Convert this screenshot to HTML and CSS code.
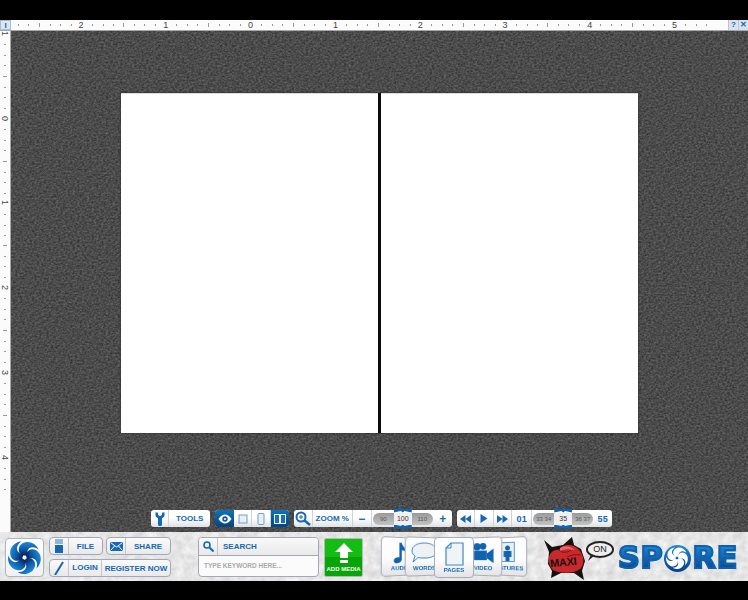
FILE: index.html
```html
<!DOCTYPE html>
<html lang="en">
<head>
    <meta charset="UTF-8">
    <meta name="viewport" content="width=device-width, initial-scale=1.0">
    <title>Spore Comic Reader</title>
    <link rel="stylesheet" href="styles.css">
</head>
<body>
    <svg class="defs" width="0" height="0">
        <defs>
            <linearGradient id="swirlBlue" x1="0" y1="0" x2="0" y2="1">
                <stop offset="0" stop-color="#1f8ad6"/>
                <stop offset="0.55" stop-color="#0b5aa6"/>
                <stop offset="1" stop-color="#0a1f55"/>
            </linearGradient>
            <symbol id="swirl" viewBox="-21 -21 42 42">
                <path id="blade" d="M-2 -2.500C-10 -6 -9 -17 1 -19.500C8 -21 15 -17 18 -10C13 -14 7 -14 4.500 -10C3 -7.500 3.500 -5 2.500 -2.500Z"/>
                <use href="#blade" transform="rotate(72)"/>
                <use href="#blade" transform="rotate(144)"/>
                <use href="#blade" transform="rotate(216)"/>
                <use href="#blade" transform="rotate(288)"/>
            </symbol>
        </defs>
    </svg>

    <div class="top-ruler">
        <div class="corner"><span class="corner-i">I</span></div>
        <div class="ruler-track">
            <div class="ruler-cells">
                <span class="inch"></span>
                <span class="inch"><b>2</b></span>
                <span class="inch"><b>1</b></span>
                <span class="inch"><b>0</b></span>
                <span class="inch"><b>1</b></span>
                <span class="inch"><b>2</b></span>
                <span class="inch"><b>3</b></span>
                <span class="inch"><b>4</b></span>
                <span class="inch"><b>5</b></span>
            </div>
        </div>
        <button class="ruler-btn">?</button>
        <button class="ruler-btn">✕</button>
    </div>

    <div class="workspace">
        <div class="side-ruler">
            <div class="side-cells">
                <span class="side-inch"><b>1</b></span>
                <span class="side-inch"><b>0</b></span>
                <span class="side-inch"><b>1</b></span>
                <span class="side-inch"><b>2</b></span>
                <span class="side-inch"><b>3</b></span>
                <span class="side-inch"><b>4</b></span>
            </div>
        </div>

        <main class="stage">
            <div class="spread">
                <div class="page"></div>
                <div class="page"></div>
            </div>

            <div class="toolbar">
                <div class="group">
                    <span class="cell cell-icon">
                        <svg width="10" height="14" viewBox="0 0 10 14"><path d="M0.500 0.500V3.500C0.500 5 2 5.800 3 6V12.500C3 13.500 3.800 14 5 14C6.200 14 7 13.500 7 12.500V6C8 5.800 9.500 5 9.500 3.500V0.500L7 0.500V3L5 4L3 3V0.500Z" fill="#1468b4"/></svg>
                    </span>
                    <span class="cell cell-tools">TOOLS</span>
                </div>

                <div class="group">
                    <span class="cell cell-icon cell-on">
                        <svg width="14" height="10" viewBox="0 0 14 10"><path d="M0.500 5C3 1.500 5 0.500 7 0.500C9 0.500 11 1.500 13.500 5C11 8.500 9 9.500 7 9.500C5 9.500 3 8.500 0.500 5Z" fill="#fff"/><circle cx="7" cy="5" r="2.700" fill="#0b5a9e"/><circle cx="7" cy="5" r="1" fill="#fff"/></svg>
                    </span>
                    <span class="cell cell-icon">
                        <svg width="10" height="10" viewBox="0 0 10 10"><rect x="1" y="1" width="8" height="8" fill="#e8f0f6" stroke="#6f9fc6"/></svg>
                    </span>
                    <span class="cell cell-icon">
                        <svg width="8" height="12" viewBox="0 0 8 12"><rect x="1" y="0.500" width="6" height="11" rx="1" fill="#e8f0f6" stroke="#6f9fc6"/></svg>
                    </span>
                    <span class="cell cell-icon cell-on">
                        <svg width="12" height="10" viewBox="0 0 12 10"><rect x="0.500" y="0.500" width="5" height="9" fill="#1f6fae" stroke="#e6f0f8"/><rect x="6.500" y="0.500" width="5" height="9" fill="#1f6fae" stroke="#e6f0f8"/></svg>
                    </span>
                </div>

                <div class="group">
                    <span class="cell cell-icon">
                        <svg width="16" height="15" viewBox="0 0 16 15"><circle cx="6" cy="6" r="4.500" fill="#fff" stroke="#1468b4" stroke-width="2"/><path d="M4 6H8M6 4V8" stroke="#1468b4"/><path d="M9.500 9.500L15 14" stroke="#1468b4" stroke-width="2.500"/></svg>
                    </span>
                    <span class="cell cell-zoom">ZOOM %</span>
                    <span class="cell cell-sign">−</span>
                    <div class="slider">
                        <span>90</span>
                        <span class="slider-now">100</span>
                        <span>110</span>
                    </div>
                    <span class="cell cell-sign cell-plus">+</span>
                </div>

                <div class="group">
                    <span class="cell cell-icon">
                        <svg width="11" height="8" viewBox="0 0 11 8"><path d="M5.500 0V8L0 4ZM11 0V8L5.500 4Z" fill="#1468b4"/></svg>
                    </span>
                    <span class="cell cell-icon">
                        <svg width="8" height="9" viewBox="0 0 8 9"><path d="M0.500 0V9L7.500 4.500Z" fill="#1468b4"/></svg>
                    </span>
                    <span class="cell cell-icon">
                        <svg width="11" height="8" viewBox="0 0 11 8"><path d="M0 0V8L5.500 4ZM5.500 0V8L11 4Z" fill="#1468b4"/></svg>
                    </span>
                    <span class="cell cell-num">01</span>
                    <div class="slider">
                        <span>33 34</span>
                        <span class="slider-now">35</span>
                        <span>36 37</span>
                    </div>
                    <span class="cell cell-num cell-last">55</span>
                </div>
            </div>
        </main>
    </div>

    <footer class="dock">
        <div class="logo-box">
            <svg class="swirl" width="33" height="33"><use href="#swirl"/></svg>
        </div>

        <div class="account">
            <div class="account-row">
                <div class="pill pill-file">
                    <span class="pill-icon">
                        <svg width="10" height="14" viewBox="0 0 10 14"><rect x="1" y="0" width="8" height="5" fill="#8db8dc"/><rect x="1" y="6" width="8" height="8" fill="#1468b4"/></svg>
                    </span>
                    <span class="pill-text">FILE</span>
                </div>
                <div class="pill pill-share">
                    <span class="pill-icon">
                        <svg width="13" height="9" viewBox="0 0 13 9"><rect width="13" height="9" fill="#1468b4"/><path d="M0.500 0.500L6.500 5L12.500 0.500M0.500 8.500L4.500 4M12.500 8.500L8.500 4" fill="none" stroke="#fff"/></svg>
                    </span>
                    <span class="pill-text">SHARE</span>
                </div>
            </div>
            <div class="pill pill-login">
                <span class="pill-icon">
                    <svg width="10" height="14" viewBox="0 0 10 14"><path d="M1 14L9 1" stroke="#1468b4" stroke-width="2"/></svg>
                </span>
                <span class="pill-text login-text">LOGIN</span>
                <span class="pill-text">REGISTER NOW</span>
            </div>
        </div>

        <div class="search">
            <div class="search-top">
                <span class="search-icon">
                    <svg width="11" height="11" viewBox="0 0 11 11"><circle cx="4" cy="4" r="3" fill="none" stroke="#1468b4" stroke-width="1.600"/><path d="M6.500 6.500L10.500 10.500" stroke="#1468b4" stroke-width="2"/></svg>
                </span>
                <span class="search-label">SEARCH</span>
            </div>
            <div class="search-input">TYPE KEYWORD HERE...</div>
        </div>

        <div class="add-media">
            <svg width="20" height="20" viewBox="0 0 20 20"><path d="M10 0L19 9H14V15H6V9H1Z" fill="#fff"/><rect x="6" y="17" width="8" height="3" fill="#fff"/></svg>
            <span class="add-text">ADD MEDIA</span>
        </div>

        <div class="media-cards">
            <div class="card card-audio">
                <svg width="20" height="27" viewBox="0 0 20 27"><path d="M8 1H11C11.500 6 18 7 17 15C16 11 14 10 11 10V21C11 24.500 7.500 26.500 4 26C0.500 25.500 0 22 2.500 20C4.500 18.500 6.500 18.300 8 19Z" fill="#0f63b0"/></svg>
                <span class="card-text">AUDIO</span>
            </div>
            <div class="card card-words">
                <svg width="27" height="22" viewBox="0 0 27 22"><path d="M13.500 1C20.500 1 26 4 26 9C26 14 20.500 16 14 16C11 16 9 16 7 15.500L2 20L4 14C2 13 1 11 1 9C1 4 6.500 1 13.500 1Z" fill="#eef2f5" stroke="#3f88c6"/></svg>
                <span class="card-text">WORDS</span>
            </div>
            <div class="card card-pages">
                <svg width="19" height="24" viewBox="0 0 19 24"><path d="M6 1H18V23H1V6Z" fill="#f1f4f6" stroke="#3f88c6" stroke-width="1.200"/><path d="M6 1V6H1" fill="none" stroke="#3f88c6"/></svg>
                <span class="card-text">PAGES</span>
            </div>
            <div class="card card-video">
                <svg width="25" height="24" viewBox="0 0 23 23"><circle cx="4.500" cy="5" r="4" fill="#0f63b0"/><circle cx="11" cy="4.500" r="3.500" fill="#0f63b0"/><rect x="1" y="9" width="14" height="10" fill="#0f63b0"/><path d="M15 12L22 7V22L15 17Z" fill="#0f63b0"/></svg>
                <span class="card-text">VIDEO</span>
            </div>
            <div class="card card-features">
                <svg width="15" height="20" viewBox="0 0 15 20"><rect x="0.500" y="0.500" width="14" height="19" fill="#e9eef2" stroke="#5a9acb"/><circle cx="7.500" cy="6" r="2.500" fill="#0f63b0"/><path d="M3.500 9H11.500V15H9.500V19H5.500V15H3.500Z" fill="#0f63b0"/></svg>
                <span class="card-text">FEATURES</span>
            </div>
        </div>

        <div class="brand">
            <div class="fist">
                <svg width="48" height="44" viewBox="0 0 48 44">
                    <path d="M1 3L9 10L20 8L29 0L31 8L38 12L42 24L39 34L41 43L31 36L18 36L8 41L9 34L5 27L6 15Z" fill="#15110f"/>
                    <path d="M6 24C5 16 11 12 16 13C19 7 30 6 35 12C41 17 42 26 38 31C32 37 17 37 10 33C7 30 6 27 6 24Z" fill="#c9282d"/>
                    <path d="M16 13C19 16 24 16 28 13M24 20C28 18 33 17 38 18" fill="none" stroke="#7d1116"/>
                    <path d="M17 11C21 8 28 9 32 13C27 12 21 12 17 14Z" fill="#e2666a"/>
                </svg>
                <span class="fist-text">MAXI</span>
            </div>
            <div class="bubble">ON</div>
            <div class="spore">
                <span class="spore-text">SP</span>
                <span class="spore-o">
                    <svg width="22" height="22"><use href="#swirl" class="swirl-white"/></svg>
                </span>
                <span class="spore-text">RE</span>
            </div>
        </div>
    </footer>
</body>
</html>
```

FILE: styles.css
```css
/* reader layout */
* {
    box-sizing: border-box;
}

body {
    margin: 0;
    width: 748px;
    height: 600px;
    overflow: hidden;
    padding-top: 20px;
    background-color: #000;
    font-family: 'Liberation Sans', Arial, sans-serif;
    color: #1468b4;
}

.defs {
    display: block;
    height: 0;
}

/* rulers */
.top-ruler {
    display: flex;
    height: 11px;
    background-color: #fbfbfb;
    border-bottom: 1px solid #a8a8a8;
}

.corner {
    width: 11px;
    display: flex;
    justify-content: center;
    align-items: center;
    background-color: #dce6f0;
    border: 1px solid #a9bdd2;
}

.corner-i {
    font-size: 8px;
    font-weight: bold;
    color: #1468b4;
}

.ruler-track {
    flex: 1;
    overflow: hidden;
}

.ruler-cells {
    display: flex;
    margin-left: -57.200px;
}

.inch {
    flex: 0 0 84.800px;
    height: 10px;
    display: flex;
    justify-content: center;
    align-items: center;
    background-image:
        linear-gradient(#999, #999),
        repeating-linear-gradient(90deg, #999 0, #999 1px, transparent 1px, transparent 10.600px);
    background-size: 1px 4px, 100% 2px;
    background-position: 0 3px, 0 4px;
    background-repeat: no-repeat;
}

.inch b {
    font-size: 9px;
    font-weight: normal;
    line-height: 10px;
    padding: 0 2px;
    background-color: #fbfbfb;
    color: #444;
}

.ruler-btn {
    width: 10px;
    height: 10px;
    padding: 0;
    border: none;
    border-left: 1px solid #bcc6d2;
    background-color: #d9e3ee;
    color: #1468b4;
    font-family: inherit;
    font-size: 8px;
    font-weight: bold;
    line-height: 10px;
}

.workspace {
    display: flex;
    height: 501px;
}

.side-ruler {
    width: 11px;
    overflow: hidden;
    background-color: #fbfbfb;
    border-right: 1px solid #a8a8a8;
}

.side-cells {
    margin-top: -40px;
}

.side-inch {
    display: flex;
    justify-content: center;
    align-items: center;
    height: 84.800px;
    background-image:
        linear-gradient(#999, #999),
        repeating-linear-gradient(180deg, #999 0, #999 1px, transparent 1px, transparent 10.600px);
    background-size: 4px 1px, 2px 100%;
    background-position: 3px 0, 4px 0;
    background-repeat: no-repeat;
}

.side-inch b {
    writing-mode: vertical-rl;
    font-size: 9px;
    font-weight: normal;
    line-height: 10px;
    padding: 2px 0;
    background-color: #fbfbfb;
    color: #444;
}

/* stage with the two pages */
.stage {
    flex: 1;
    display: flex;
    flex-direction: column;
    align-items: center;
    padding-top: 62px;
    padding-bottom: 4px;
    background-color: #484848;
    background-image: url("data:image/svg+xml,%3Csvg xmlns='http://www.w3.org/2000/svg' width='400' height='400'%3E%3Cfilter id='n' x='0' y='0' width='100%25' height='100%25' color-interpolation-filters='sRGB'%3E%3CfeTurbulence type='fractalNoise' baseFrequency='0.42 0.55' numOctaves='3' stitchTiles='stitch'/%3E%3CfeColorMatrix values='0.3 0 0 0 0.145 0.3 0 0 0 0.145 0.3 0 0 0 0.145 0 0 0 0 1'/%3E%3C/filter%3E%3Crect width='400' height='400' filter='url(%23n)'/%3E%3C/svg%3E");
}

.spread {
    display: flex;
    gap: 3px;
    padding: 0 1px;
    background-color: #0c0c0c;
    box-shadow: 0 0 2px #222;
}

.page {
    width: 257px;
    height: 340px;
    background-color: #fff;
    border-top: 1px solid #ddd;
}

.page:first-child {
    margin-left: -1px;
}

.page:last-child {
    margin-right: -1px;
}

/* toolbar over the stage */
.toolbar {
    display: flex;
    gap: 5px;
    margin-top: auto;
    margin-left: 4px;
    height: 19px;
    padding: 1px 0;
}

.group {
    display: flex;
    height: 17px;
    border-radius: 3px;
    background: linear-gradient(#fff 45%, #dfe2e5);
}

.cell {
    display: flex;
    justify-content: center;
    align-items: center;
    height: 17px;
    border-right: 1px solid #cfd3d7;
    font-size: 8px;
    font-weight: bold;
}

.cell:last-child {
    border-right: none;
}

.cell-icon {
    width: 18.500px;
}

.cell-on {
    background: linear-gradient(#1272b8, #06437f);
    border-right: none;
}

.group > .cell-on:first-child {
    border-radius: 3px 0 0 3px;
}

.group > .cell-on:last-child {
    border-radius: 0 3px 3px 0;
}

.cell-tools {
    width: 41px;
}

.cell-zoom {
    width: 40px;
}

.cell-sign {
    width: 19px;
    font-size: 12px;
}

.cell-plus {
    width: 18px;
    margin-left: 1px;
}

.cell-num {
    width: 20px;
    font-size: 9px;
    letter-spacing: 0.2px;
}

.cell-last {
    width: 19px;
    border-right: none;
}

.slider {
    position: relative;
    display: flex;
    width: 60px;
    height: 12px;
    margin: 2.500px 0 0 1px;
    border-radius: 6px;
    background: linear-gradient(#9a9a9a, #c2c2c2);
    font-size: 6px;
    color: #555;
}

.slider span {
    flex: 1;
    text-align: center;
    line-height: 12px;
    white-space: nowrap;
}

.slider .slider-now {
    flex: 0 0 18px;
    background-color: #f0f0f0;
    color: #333;
    font-size: 7px;
}

.slider-now::before,
.slider-now::after {
    content: "";
    position: absolute;
    left: 50%;
    width: 18px;
    height: 4px;
    margin-left: -9px;
    background-color: #0f63b0;
}

.slider-now::before {
    top: -4px;
    clip-path: polygon(0 0, 100% 0, 100% 100%, 60% 60%, 50% 100%, 40% 60%, 0 100%);
}

.slider-now::after {
    bottom: -4px;
    clip-path: polygon(0 100%, 100% 100%, 100% 0, 60% 40%, 50% 0, 40% 40%, 0 0);
}

/* bottom dock */
.dock {
    display: flex;
    height: 49px;
    padding: 5px 0 0 5px;
    background-color: #e6e6e6;
    background-image: url("data:image/svg+xml,%3Csvg xmlns='http://www.w3.org/2000/svg' width='300' height='60'%3E%3Cfilter id='n' x='0' y='0' width='100%25' height='100%25' color-interpolation-filters='sRGB'%3E%3CfeTurbulence type='fractalNoise' baseFrequency='0.13' numOctaves='3'/%3E%3CfeColorMatrix values='0.18 0 0 0 0.81 0.18 0 0 0 0.81 0.18 0 0 0 0.81 0 0 0 0 1'/%3E%3C/filter%3E%3Crect width='300' height='60' filter='url(%23n)'/%3E%3C/svg%3E");
}

.logo-box {
    display: flex;
    justify-content: center;
    align-items: center;
    width: 39px;
    height: 39px;
    margin-top: 1px;
    border: 1px solid #aeb4be;
    border-radius: 4px;
    background: linear-gradient(#fff, #f1f1f1);
}

.swirl {
    fill: url(#swirlBlue);
}

.account {
    display: flex;
    flex-direction: column;
    gap: 4px;
    width: 122px;
    margin-left: 5px;
}

.account-row {
    display: flex;
    gap: 3px;
}

.pill {
    display: flex;
    align-items: center;
    height: 18px;
    border: 1px solid #a2a9b6;
    border-radius: 4px;
    background: linear-gradient(#fafafa, #e9e9e9);
    font-size: 8px;
    font-weight: bold;
}

.pill-file {
    width: 54px;
}

.pill-share {
    width: 65px;
}

.pill-icon {
    flex: 0 0 19px;
    height: 16px;
    display: flex;
    justify-content: center;
    align-items: center;
    border-right: 1px solid #c2c6cc;
}

.pill-text {
    flex: 1;
    text-align: center;
    white-space: nowrap;
}

.login-text {
    flex: 0 0 33px;
    height: 16px;
    line-height: 16px;
    border-right: 1px solid #c2c6cc;
}

.search {
    width: 121px;
    height: 40px;
    margin-left: 27px;
    border: 1px solid #a2a9b6;
    border-radius: 4px;
    background-color: #fbfbfb;
    overflow: hidden;
}

.search-top {
    display: flex;
    height: 18px;
    border-bottom: 1px solid #a2a9b6;
    background: linear-gradient(#f9f9f9, #e9e9e9);
}

.search-icon {
    flex: 0 0 19px;
    display: flex;
    justify-content: center;
    align-items: center;
    border-right: 1px solid #c2c6cc;
}

.search-label {
    padding-left: 5px;
    font-size: 8px;
    font-weight: bold;
    line-height: 17px;
}

.search-input {
    padding-left: 5px;
    font-size: 6.500px;
    font-weight: bold;
    line-height: 20px;
    color: #aaa;
}

.add-media {
    display: flex;
    flex-direction: column;
    align-items: center;
    width: 39px;
    height: 39px;
    margin: 1px 0 0 5px;
    padding-top: 4px;
    border: 1px solid #b3b9b3;
    border-radius: 2px;
    background: linear-gradient(#14bd14 50%, #07a507 50%);
}

.add-text {
    margin-top: 2px;
    font-size: 6px;
    font-weight: bold;
    line-height: 8px;
    color: #fff;
    white-space: nowrap;
}

/* fanned media tabs */
.media-cards {
    display: flex;
    height: 41px;
    margin-left: 18px;
}

.card {
    position: relative;
    display: flex;
    flex-direction: column;
    align-items: center;
    justify-content: space-between;
    flex: 0 0 39px;
    height: 39px;
    padding: 4px 0 3px;
    border: 1px solid #a6adba;
    border-radius: 4px;
    background: linear-gradient(#fdfdfd 55%, #e4e4e4);
}

.card-text {
    font-size: 6px;
    font-weight: bold;
    line-height: 8px;
    white-space: nowrap;
}

.card-audio {
    z-index: 1;
    transform: perspective(110px) rotateY(16deg);
}

.card-words {
    z-index: 2;
    margin-left: -15px;
    transform: perspective(110px) rotateY(12deg);
}

.card-pages {
    z-index: 5;
    flex-basis: 40px;
    height: 41px;
    margin-left: -10px;
}

.card-video {
    z-index: 4;
    flex-basis: 38px;
    margin-left: -10px;
    transform: perspective(110px) rotateY(-12deg);
}

.card-features {
    z-index: 3;
    margin-left: -14px;
    transform: perspective(110px) rotateY(-16deg);
}

/* logos on the right */
.brand {
    position: relative;
    display: flex;
    margin-left: 16px;
}

.fist {
    position: relative;
    width: 48px;
    height: 44px;
}

.fist-text {
    position: absolute;
    left: 7px;
    top: 19px;
    font-size: 11px;
    font-weight: bold;
    letter-spacing: -0.3px;
    color: #15110f;
    transform: rotate(-6deg);
}

.bubble {
    position: absolute;
    left: 43px;
    top: 4px;
    width: 28px;
    height: 17px;
    border: 2px solid #222;
    border-radius: 50%;
    background-color: #eee;
    text-align: center;
    font-size: 9px;
    line-height: 13px;
    color: #222;
}

.bubble::after {
    content: "";
    position: absolute;
    left: 0;
    bottom: -5px;
    width: 7px;
    height: 6px;
    background-color: #222;
    clip-path: polygon(100% 0, 0 100%, 40% 0);
}

.spore {
    display: flex;
    align-items: center;
    height: 28px;
    margin: 7px 0 0 27px;
}

.spore-text {
    font-family: 'DejaVu Sans', sans-serif;
    font-size: 30px;
    font-weight: bold;
    line-height: 28px;
    letter-spacing: 1px;
    background: linear-gradient(#1f8ad6, #083f8a);
    -webkit-background-clip: text;
    background-clip: text;
    color: transparent;
    -webkit-text-stroke: 2px #0e62ad;
}

.spore-o {
    display: flex;
    justify-content: center;
    align-items: center;
    flex: 0 0 27px;
    height: 27px;
    border-radius: 50%;
    background: linear-gradient(#1f8ad6, #083f8a);
    margin-right: 2px;
}

.swirl-white {
    fill: #fff;
}
```
